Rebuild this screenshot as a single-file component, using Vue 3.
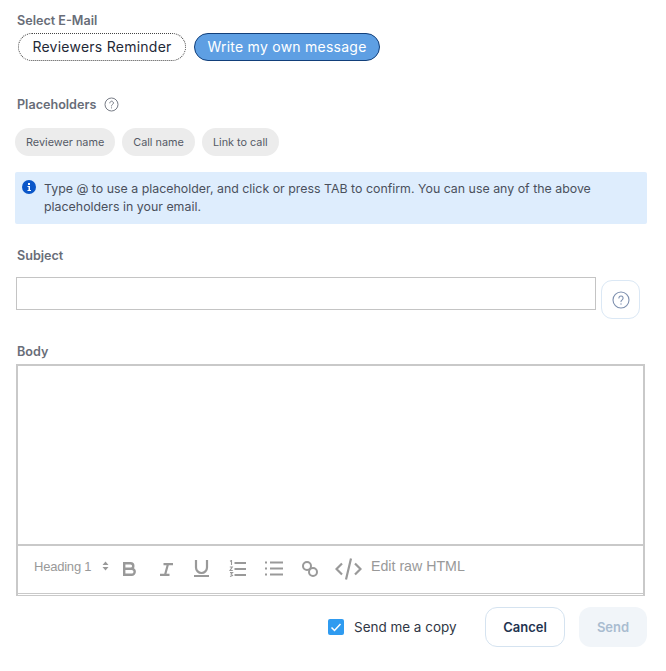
<script setup>
const chips = ['Reviewer name', 'Call name', 'Link to call']
</script>

<template>
  <div class="page">
    <div class="label first">Select E-Mail</div>
    <div class="pills">
      <button class="pill outline">Reviewers Reminder</button>
      <button class="pill active">Write my own message</button>
    </div>

    <div class="ph-head">
      <span class="label">Placeholders</span>
      <svg width="15" height="15" viewBox="0 0 15 15" fill="none" stroke="#777c86" stroke-width="1">
        <circle cx="7.5" cy="7.5" r="6.5" />
        <path d="M5.800 5.900a1.800 1.800 0 1 1 2.700 1.600c-.6.4-1 .7-1 1.500" stroke-linecap="round" />
        <circle cx="7.5" cy="10.800" r=".6" fill="#777c86" stroke="none" />
      </svg>
    </div>
    <div class="chips">
      <span v-for="c in chips" :key="c" class="chip">{{ c }}</span>
    </div>

    <div class="info">
      <svg class="info-icon" width="14" height="14" viewBox="0 0 14 14">
        <circle cx="7" cy="7" r="7" fill="#0b57c9" />
        <rect x="6" y="3" width="2" height="2" fill="#fff" />
        <path d="M5.500 6h2.500v4h1v1H5.500v-1h1V7h-1z" fill="#fff" />
      </svg>
      <p>Type @ to use a placeholder, and click or press TAB to confirm. You can use any of the above placeholders in your email.</p>
    </div>

    <div class="label subject-label">Subject</div>
    <div class="subject-row">
      <div class="subject-input"></div>
      <button class="help">
        <svg width="18" height="18" viewBox="0 0 18 18" fill="none" stroke="#7d8fae" stroke-width="1.100">
          <circle cx="9" cy="9" r="8" />
          <path d="M6.900 7a2.100 2.100 0 1 1 3.200 1.900c-.7.4-1.100.8-1.100 1.700" stroke-linecap="round" />
          <circle cx="9" cy="13" r=".7" fill="#7d8fae" stroke="none" />
        </svg>
      </button>
    </div>

    <div class="label body-label">Body</div>
    <div class="editor">
      <div class="editor-body"></div>
      <div class="toolbar">
        <span class="heading">Heading 1</span>
        <svg class="updown" width="7" height="10" viewBox="0 0 7 10" fill="#999">
          <path d="M3.500 0.500 6.500 4H.5zM3.500 9.500 .5 6h6z" />
        </svg>
        <svg class="ic bold" width="13" height="14" viewBox="0 0 13 14" fill="none" stroke="#999" stroke-width="2.400">
          <path d="M1.200 1.200h6.300a2.800 2.800 0 0 1 0 5.600H1.200zM1.200 6.800h7.500a3 3 0 0 1 0 6H1.200z" />
        </svg>
        <svg class="ic italic" width="13" height="13" viewBox="0 0 13 13" fill="none" stroke="#999" stroke-width="2.200">
          <path d="M3.500 1.100H13M0 11.900h9.500M8 1 5 12" />
        </svg>
        <svg class="ic under" width="15" height="17" viewBox="0 0 15 17" fill="none" stroke="#999" stroke-width="2.200">
          <path d="M2 0v7.500a5.500 5.500 0 0 0 11 0V0M0 16h15" />
        </svg>
        <svg class="ic ol" width="17" height="17" viewBox="0 0 17 17" fill="none" stroke="#999">
          <path d="M5.500 3h11.500M5.500 9h11.500M5.500 15h11.500" stroke-width="2.200" />
          <path d="M1 1.200 2.500.5V5M.8 7h2.500L1 10.500h2.800M1 12.500h2.500L2 14l1.500 1.500L1 16.500" stroke-width="1.100" />
        </svg>
        <svg class="ic ul" width="18" height="15" viewBox="0 0 18 15" fill="none" stroke="#999" stroke-width="2.200">
          <path d="M5 1.500h13M5 7.500h13M5 13.500h13M0 1.500h2M0 7.500h2M0 13.500h2" />
        </svg>
        <svg class="ic link" width="16" height="16" viewBox="0 0 16 16" fill="none" stroke="#999" stroke-width="2">
          <circle cx="5" cy="5" r="4" />
          <circle cx="11" cy="11" r="4" />
        </svg>
        <svg class="ic code" width="27" height="22" viewBox="0 0 27 22" fill="none" stroke="#999" stroke-width="2.200">
          <path d="M7 5.500 1.500 11 7 16.500M20 5.500l5.500 5.500-5.500 5.500M16 .5l-5 21" />
        </svg>
        <span class="raw">Edit raw HTML</span>
      </div>
    </div>

    <div class="footer">
      <span class="check">
        <svg width="16" height="16" viewBox="0 0 16 16" fill="none" stroke="#fff" stroke-width="1.500">
          <path d="M3.500 8.500 6.500 11.500 12.500 5" />
        </svg>
      </span>
      <span class="copy">Send me a copy</span>
      <button class="btn cancel">Cancel</button>
      <button class="btn send">Send</button>
    </div>
  </div>
</template>

<style>
html, body { margin: 0; background: #fff; }
</style>

<style scoped>
.page {
  width: 666px;
  height: 671px;
  box-sizing: border-box;
  overflow: hidden;
  padding: 13px 0 0 16px;
  font-family: Inter, "Liberation Sans", sans-serif;
  color: #2c3444;
}
.label {
  margin-left: 1px;
  font-size: 12.6px;
  line-height: 15px;
  font-weight: 600;
  color: #686d78;
}
.pills {
  display: flex;
  gap: 8px;
  margin: 5px 0 0 2px;
}
.pill {
  height: 28px;
  padding: 0;
  border-radius: 14px;
  font: 400 14px/20px Inter, sans-serif;
  letter-spacing: 0.25px;
}
.outline {
  width: 168px;
  background: #fff;
  color: #1f2937;
  border: 1px dotted #444;
}
.active {
  width: 186px;
  background: #5e9fe3;
  color: #fff;
  border: 1px solid #123f7a;
}
.ph-head {
  display: flex;
  align-items: center;
  gap: 8px;
  margin-top: 35px;
  height: 16px;
}
.chips {
  display: flex;
  gap: 7px;
  margin: 16px 0 0 -1px;
}
.chip {
  height: 28px;
  padding: 0 11px;
  border-radius: 14px;
  background: #ececec;
  font-size: 10.85px;
  line-height: 28px;
  color: #555a66;
}
.info {
  display: flex;
  gap: 8px;
  width: 632px;
  height: 52px;
  box-sizing: border-box;
  margin: 16px 0 0 -1px;
  padding: 8px 7px;
  background: #deedfd;
  border-radius: 2px;
}
.info-icon {
  flex: none;
}
.info p {
  margin: 0;
  font-size: 12.39px;
  line-height: 18px;
  color: #4a505c;
}
.subject-label {
  margin-top: 24px;
}
.subject-row {
  display: flex;
  align-items: flex-start;
  gap: 5px;
  margin-top: 14px;
}
.subject-input {
  width: 580px;
  height: 33px;
  box-sizing: border-box;
  border: 1px solid #c4c4c4;
}
.help {
  width: 39px;
  height: 39px;
  margin-top: 3px;
  padding: 0;
  display: flex;
  align-items: center;
  justify-content: center;
  background: #fff;
  border: 1px solid #dbe8f5;
  border-radius: 11px;
}
.body-label {
  margin-top: 25px;
}
.editor {
  width: 629px;
  height: 232px;
  box-sizing: border-box;
  margin-top: 5px;
  border: 2px solid #c9c9c9;
  border-bottom-width: 1px;
  display: flex;
  flex-direction: column;
}
.editor-body {
  flex: none;
  height: 178px;
  border-bottom: 2px solid #c9c9c9;
}
.toolbar {
  flex: none;
  height: 48px;
  border-bottom: 1px solid #c9c9c9;
  display: flex;
  align-items: center;
  padding: 0 0 7px 16px;
  box-sizing: border-box;
  font-family: "Liberation Sans", sans-serif;
  color: #999;
}
.heading {
  flex: none;
  width: 57px;
  font-size: 13px;
  letter-spacing: -0.22px;
  white-space: nowrap;
}
.raw {
  flex: none;
  margin-left: 9px;
  font-size: 14.2px;
}
.updown { flex: none; margin-left: 11px; margin-bottom: 1px; }
.ic { flex: none; }
.bold { margin-left: 14px; margin-top: 5px; }
.italic { margin-left: 24px; margin-top: 6px; }
.under { margin-left: 21px; margin-top: 5px; }
.ol { margin-left: 20px; margin-top: 4px; }
.ul { margin-left: 19px; margin-top: 5px; }
.link { margin-left: 19px; margin-top: 5px; }
.code { margin-left: 17px; margin-top: 5px; }
.footer {
  display: flex;
  align-items: center;
  margin: 11px 0 0 312px;
  height: 40px;
}
.check {
  flex: none;
  width: 16px;
  height: 16px;
  border-radius: 2px;
  background: #2f9bf0;
  display: flex;
}
.copy {
  flex: none;
  margin-left: 10px;
  font-size: 13.46px;
  color: #303745;
  width: 131px;
}
.btn {
  flex: none;
  height: 40px;
  padding: 0;
  border-radius: 12px;
  font: 600 13px/16px Inter, sans-serif;
}
.cancel {
  width: 80px;
  background: #fff;
  border: 1px solid #d5e3f0;
  color: #1f3350;
}
.send {
  width: 68px;
  margin-left: 14px;
  background: #f1f5f9;
  border: 0;
  color: #a9bcd0;
}
</style>
